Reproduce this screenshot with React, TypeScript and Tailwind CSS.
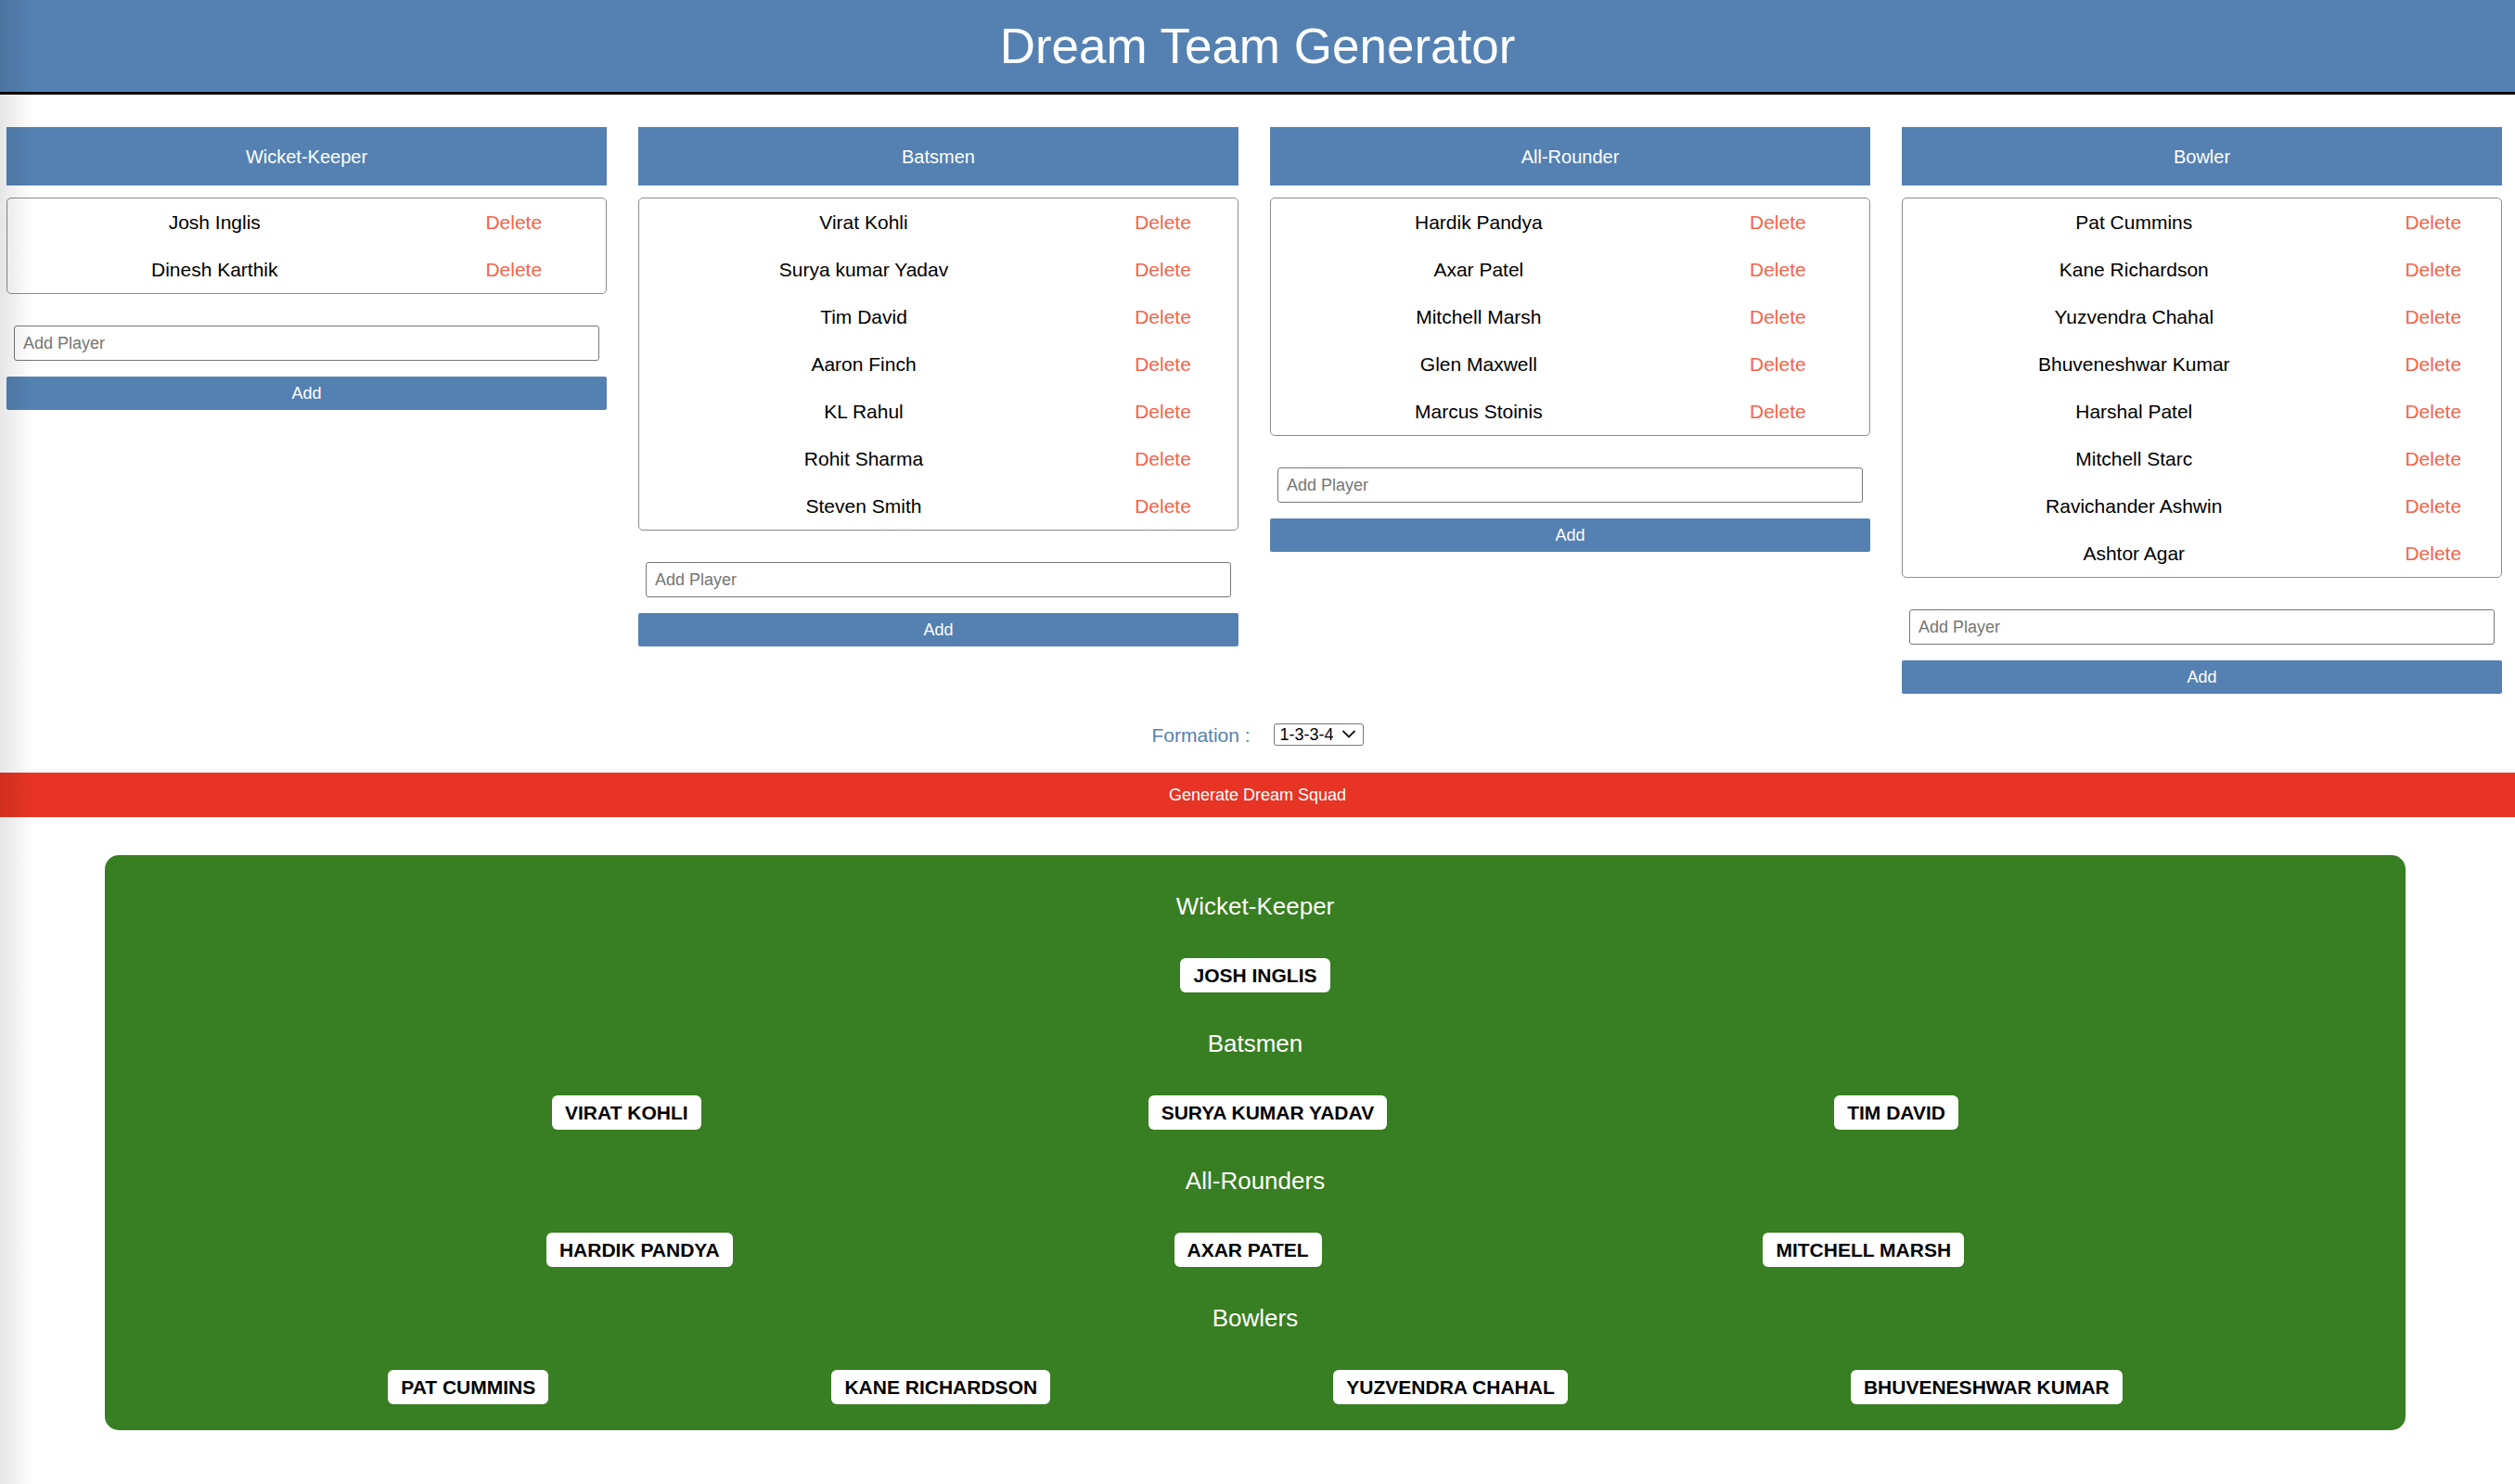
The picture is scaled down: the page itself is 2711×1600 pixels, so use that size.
import React, { useState } from "react";

type Column = { title: string; players: string[] };

const initialColumns: Column[] = [
	{ title: "Wicket-Keeper", players: ["Josh Inglis", "Dinesh Karthik"] },
	{
		title: "Batsmen",
		players: [
			"Virat Kohli",
			"Surya kumar Yadav",
			"Tim David",
			"Aaron Finch",
			"KL Rahul",
			"Rohit Sharma",
			"Steven Smith",
		],
	},
	{
		title: "All-Rounder",
		players: ["Hardik Pandya", "Axar Patel", "Mitchell Marsh", "Glen Maxwell", "Marcus Stoinis"],
	},
	{
		title: "Bowler",
		players: [
			"Pat Cummins",
			"Kane Richardson",
			"Yuzvendra Chahal",
			"Bhuveneshwar Kumar",
			"Harshal Patel",
			"Mitchell Starc",
			"Ravichander Ashwin",
			"Ashtor Agar",
		],
	},
];

const squadTitles = ["Wicket-Keeper", "Batsmen", "All-Rounders", "Bowlers"];

const PlayerColumn = ({
	column,
	onDelete,
	onAdd,
}: {
	column: Column;
	onDelete: (i: number) => void;
	onAdd: (name: string) => void;
}) => {
	const [name, setName] = useState("");

	return (
		<div className="flex flex-col">
			<div className="h-[63px] flex items-center justify-center bg-[#5481b2] text-white text-[20px]">
				{column.title}
			</div>
			<div className="mt-[13px] border border-[#8c8c8c] rounded-[5px] bg-white">
				<table className="w-full border-collapse">
					<tbody>
						{column.players.map((p, i) => (
							<tr key={p + i}>
								<td className="py-[13px] leading-[25px] text-center text-[21px] text-black">{p}</td>
								<td className="py-[13px] leading-[25px] text-center text-[21px]">
									<button type="button" onClick={() => onDelete(i)} className="text-[#f2644a]">
										Delete
									</button>
								</td>
							</tr>
						))}
					</tbody>
				</table>
			</div>
			<input
				type="text"
				placeholder="Add Player"
				value={name}
				onChange={e => setName(e.target.value)}
				className="mt-[34px] mx-[8px] h-[38px] px-[9px] border border-[#767676] rounded-[3px] text-[18px] text-black placeholder:text-[#757575] outline-none"
			/>
			<button
				type="button"
				onClick={() => {
					if (!name.trim()) return;
					onAdd(name.trim());
					setName("");
				}}
				className="mt-[17px] h-[36px] bg-[#5481b2] text-white text-[18px] rounded-[2px]">
				Add
			</button>
		</div>
	);
};

const Badge = ({ name }: { name: string }) => (
	<span className="h-[37px] px-[14px] flex items-center bg-white rounded-[6px] text-black font-bold text-[21px] uppercase">
		{name}
	</span>
);

export default function App() {
	const [columns, setColumns] = useState(initialColumns);
	const [formation, setFormation] = useState("1-3-3-4");

	const counts = formation.split("-").map(n => parseInt(n));

	const handleDelete = (c: number, i: number) => {
		setColumns(cols =>
			cols.map((col, ci) => (ci === c ? { ...col, players: col.players.filter((_, pi) => pi !== i) } : col)),
		);
	};

	const handleAdd = (c: number, name: string) => {
		setColumns(cols => cols.map((col, ci) => (ci === c ? { ...col, players: [...col.players, name] } : col)));
	};

	return (
		<div className="relative min-h-screen bg-white font-['Liberation_Sans',Arial,sans-serif]">
			<header className="h-[102px] flex items-center justify-center bg-[#5481b2] border-b-[3px] border-black">
				<h1 className="text-white text-[53px] leading-none">Dream Team Generator</h1>
			</header>

			<div className="grid grid-cols-4 items-start gap-x-[34px] pt-[35px] pl-[7px] pr-[14px]">
				{columns.map((col, c) => (
					<PlayerColumn
						key={col.title}
						column={col}
						onDelete={i => handleDelete(c, i)}
						onAdd={name => handleAdd(c, name)}
					/>
				))}
			</div>

			<div className="mt-[32px] flex items-center justify-center gap-[25px]">
				<span className="text-[21px] leading-[23px] text-[#5481b2]">Formation :</span>
				<div className="relative">
					<select
						value={formation}
						onChange={e => setFormation(e.target.value)}
						className="appearance-none w-[97px] h-[24px] pl-[6px] border border-[#767676] rounded-[3px] bg-white text-[18px] leading-[22px] text-black">
						<option value="1-3-3-4">1-3-3-4</option>
						<option value="1-4-2-4">1-4-2-4</option>
						<option value="1-4-3-3">1-4-3-3</option>
						<option value="1-5-2-3">1-5-2-3</option>
					</select>
					<svg
						className="pointer-events-none absolute right-[8px] top-[6px]"
						width="16"
						height="11"
						viewBox="0 0 16 11"
						fill="none">
						<path d="M1.5 2 L8 8.5 L14.5 2" stroke="#111" strokeWidth="1.8" />
					</svg>
				</div>
			</div>

			<button
				type="button"
				className="mt-[28px] w-full h-[48px] bg-[#e73424] text-white text-[18px]">
				Generate Dream Squad
			</button>

			<div className="mt-[41px] ml-[113px] w-[2480px] bg-[#387e22] rounded-[15px] pt-[40px] pb-[28px] flex flex-col gap-[40px]">
				{squadTitles.map((title, s) => (
					<React.Fragment key={title}>
						<h2 className="text-center text-white text-[26px] leading-[31px]">{title}</h2>
						<div className="flex justify-evenly">
							{columns[s].players.slice(0, counts[s]).map(p => (
								<Badge key={p} name={p} />
							))}
						</div>
					</React.Fragment>
				))}
			</div>

			{/* window edge shadow from the screenshot */}
			<div className="pointer-events-none absolute inset-y-0 left-0 w-[36px] bg-linear-to-r from-black/10 to-transparent" />
		</div>
	);
}
